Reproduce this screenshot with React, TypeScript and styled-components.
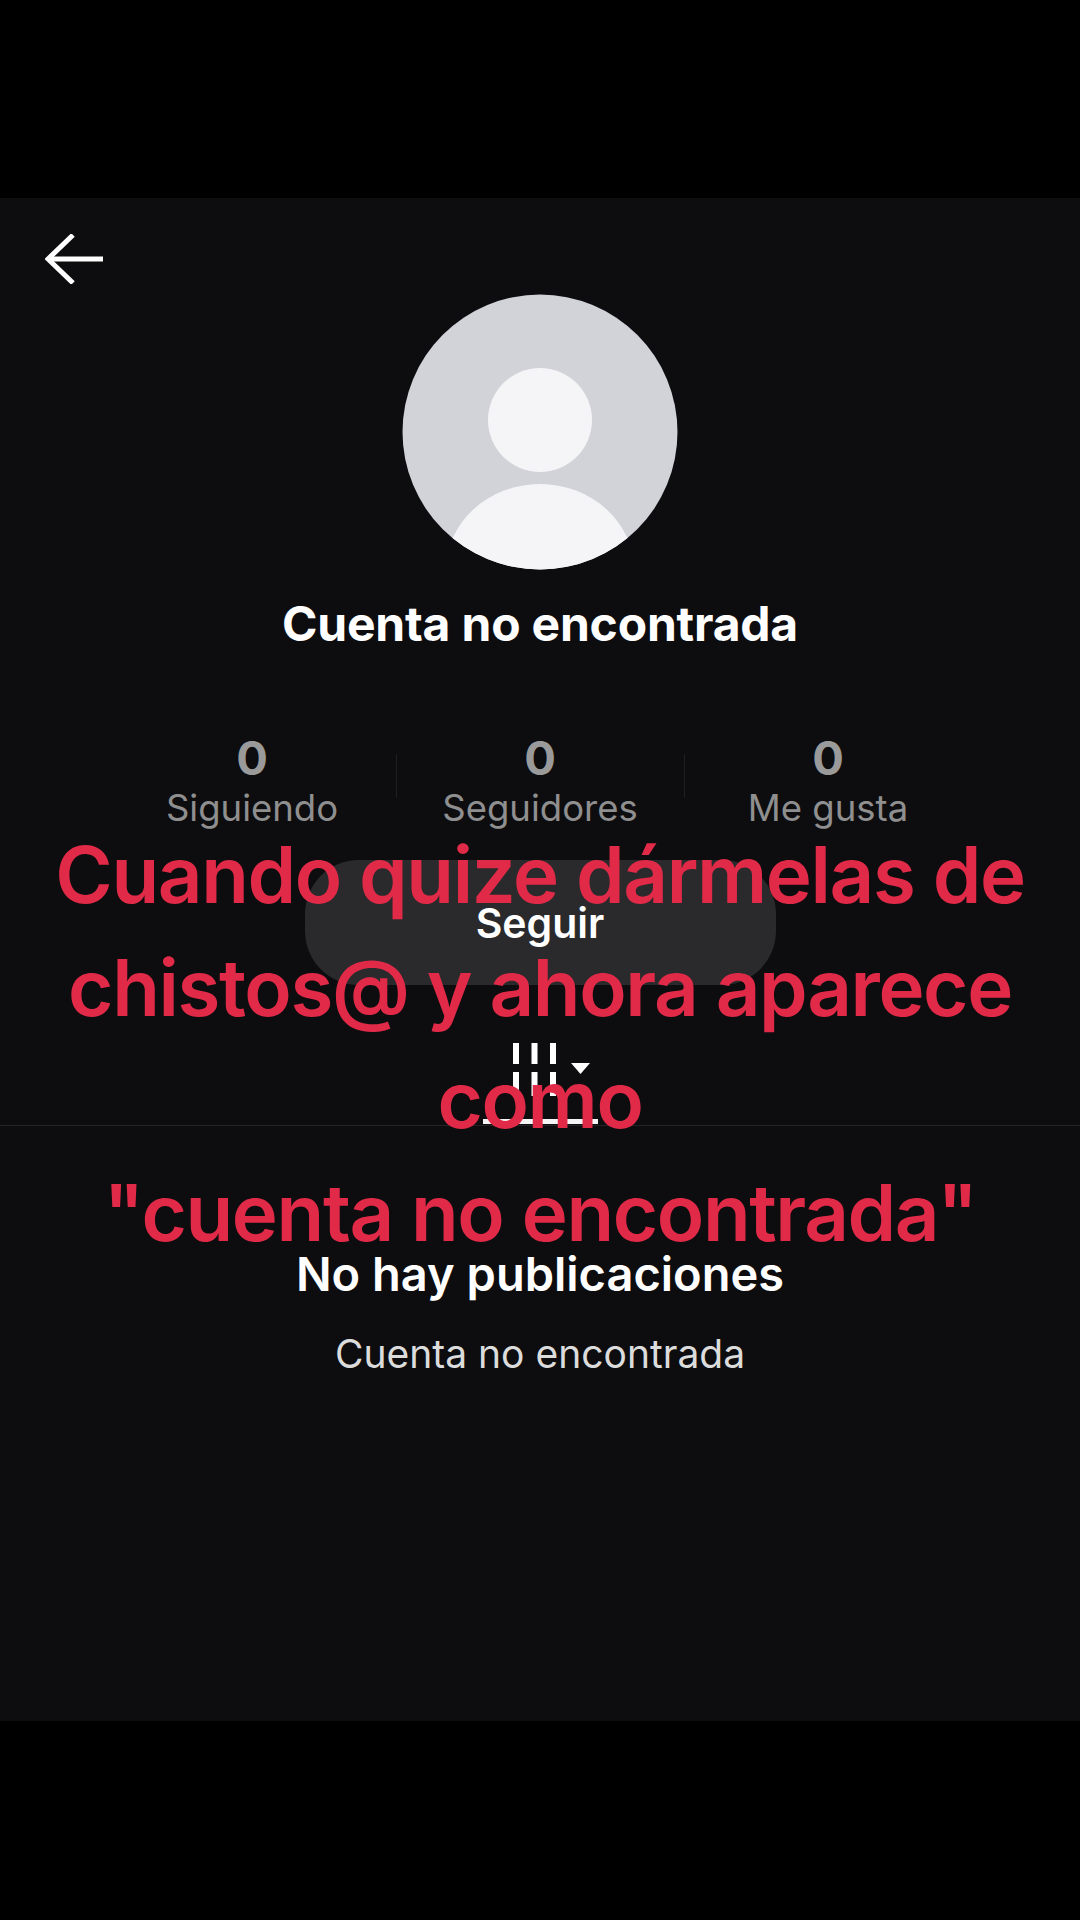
import React from "react";
import styled, { createGlobalStyle } from "styled-components";

const GlobalStyle = createGlobalStyle`
  html, body {
    margin: 0;
    padding: 0;
    background: #000;
    font-family: "Inter", "Liberation Sans", sans-serif;
  }
`;

const Screen = styled.div`
  position: relative;
  width: 1080px;
  height: 1920px;
  overflow: hidden;
  background: #000;
  display: flex;
  flex-direction: column;
`;

const LetterBox = styled.div<{ size: number }>`
  height: ${(props) => props.size}px;
  flex-shrink: 0;
  background: #000;
`;

const Profile = styled.main`
  flex: 1;
  background: #0d0d0f;
  display: flex;
  flex-direction: column;
  align-items: center;
`;

const Header = styled.header`
  align-self: stretch;
  height: 96px;
  padding: 36px 0 0 45px;
  box-sizing: border-box;
`;

const Avatar = styled.svg`
  width: 276px;
  height: 276px;
  display: block;
`;

const Name = styled.h1`
  margin: 28px 0 0;
  font-size: 48px;
  line-height: 52px;
  font-weight: 700;
  letter-spacing: -0.2px;
  color: #fff;
`;

const Stats = styled.div`
  display: flex;
  align-items: center;
  margin-top: 83px;
`;

const Stat = styled.div`
  width: 287px;
  display: flex;
  flex-direction: column;
  align-items: center;
`;

const StatValue = styled.span`
  font-size: 47px;
  line-height: 50px;
  font-weight: 700;
  color: #9a9a9a;
`;

const StatLabel = styled.span`
  font-size: 36.5px;
  line-height: 50px;
  color: #8f8f8f;
`;

const StatDivider = styled.div`
  width: 1px;
  height: 44px;
  margin-top: -14px;
  background: #1f1f21;
`;

const FollowButton = styled.button`
  width: 471px;
  height: 125px;
  margin-top: 27px;
  border: none;
  border-radius: 54px;
  background: #2a2a2c;
  color: #fff;
  font-family: inherit;
  font-size: 41px;
  font-weight: 600;
  padding: 0;
`;

const Tabs = styled.div`
  align-self: stretch;
  height: 140px;
  border-bottom: 1px solid #242426;
  display: flex;
  justify-content: center;
`;

const Tab = styled.div`
  width: 115px;
  height: 139px;
  box-sizing: border-box;
  border-bottom: 5px solid #f5f5f5;
  padding: 58px 0 0 30px;
`;

const GridIcon = styled.svg`
  width: 80px;
  height: 60px;
  display: block;
`;

const EmptyTitle = styled.h2`
  margin: 121px 0 0;
  font-size: 47px;
  line-height: 54px;
  font-weight: 600;
  color: #fff;
`;

const EmptyText = styled.p`
  margin: 26px 0 0;
  font-size: 39px;
  line-height: 54px;
  color: #dcdcdc;
`;

const Caption = styled.div`
  position: absolute;
  left: 0;
  right: 0;
  top: 819px;
  text-align: center;
  font-family: "Inter", "Liberation Sans", sans-serif;
  font-size: 78px;
  line-height: 112.5px;
  font-weight: 600;
  letter-spacing: -1.4px;
  color: #e02a48;
  pointer-events: none;
`;

const CaptionLine = styled.div`
  white-space: nowrap;
`;

const BackArrow = () => (
  <svg width="58" height="50" viewBox="0 0 58 50" fill="none" stroke="#fff" strokeWidth="5">
    <path d="M58 25H3" />
    <path d="M28 1 3 25l25 24" />
  </svg>
);

const App: React.FC = () => {
  const stats = [
    { label: "Siguiendo" },
    { label: "Seguidores" },
    { label: "Me gusta" },
  ];

  return (
    <Screen>
      <GlobalStyle />
      <LetterBox size={198} />
      <Profile>
        <Header>
          <BackArrow />
        </Header>
        <Avatar viewBox="0 0 276 276">
          <defs>
            <clipPath id="avatarClip">
              <circle cx="138" cy="138" r="137.5" />
            </clipPath>
          </defs>
          <g clipPath="url(#avatarClip)">
            <rect width="276" height="276" fill="#d1d3d9" />
            <circle cx="138" cy="126" r="52" fill="#f5f5f7" />
            <ellipse cx="138" cy="276" rx="94" ry="86" fill="#f5f5f7" />
          </g>
        </Avatar>
        <Name>Cuenta no encontrada</Name>
        <Stats>
          {stats.map((stat, i) => (
            <React.Fragment key={stat.label}>
              {i > 0 && <StatDivider />}
              <Stat>
                <StatValue>0</StatValue>
                <StatLabel>{stat.label}</StatLabel>
              </Stat>
            </React.Fragment>
          ))}
        </Stats>
        <FollowButton>Seguir</FollowButton>
        <Tabs>
          <Tab>
            <GridIcon viewBox="0 0 80 60" fill="#fff">
              <rect x="0" y="0" width="6" height="21" />
              <rect x="18.5" y="0" width="6" height="21" />
              <rect x="37" y="0" width="6" height="21" />
              <rect x="0" y="29" width="6" height="24" />
              <rect x="18.5" y="29" width="6" height="24" />
              <rect x="37" y="29" width="6" height="24" />
              <path d="M58 20h19l-9.5 11z" />
            </GridIcon>
          </Tab>
        </Tabs>
        <EmptyTitle>No hay publicaciones</EmptyTitle>
        <EmptyText>Cuenta no encontrada</EmptyText>
      </Profile>
      <LetterBox size={199} />
      <Caption>
        <CaptionLine>Cuando quize dármelas de</CaptionLine>
        <CaptionLine>chistos@ y ahora aparece</CaptionLine>
        <CaptionLine>como</CaptionLine>
        <CaptionLine>"cuenta no encontrada"</CaptionLine>
      </Caption>
    </Screen>
  );
};

export default App;
